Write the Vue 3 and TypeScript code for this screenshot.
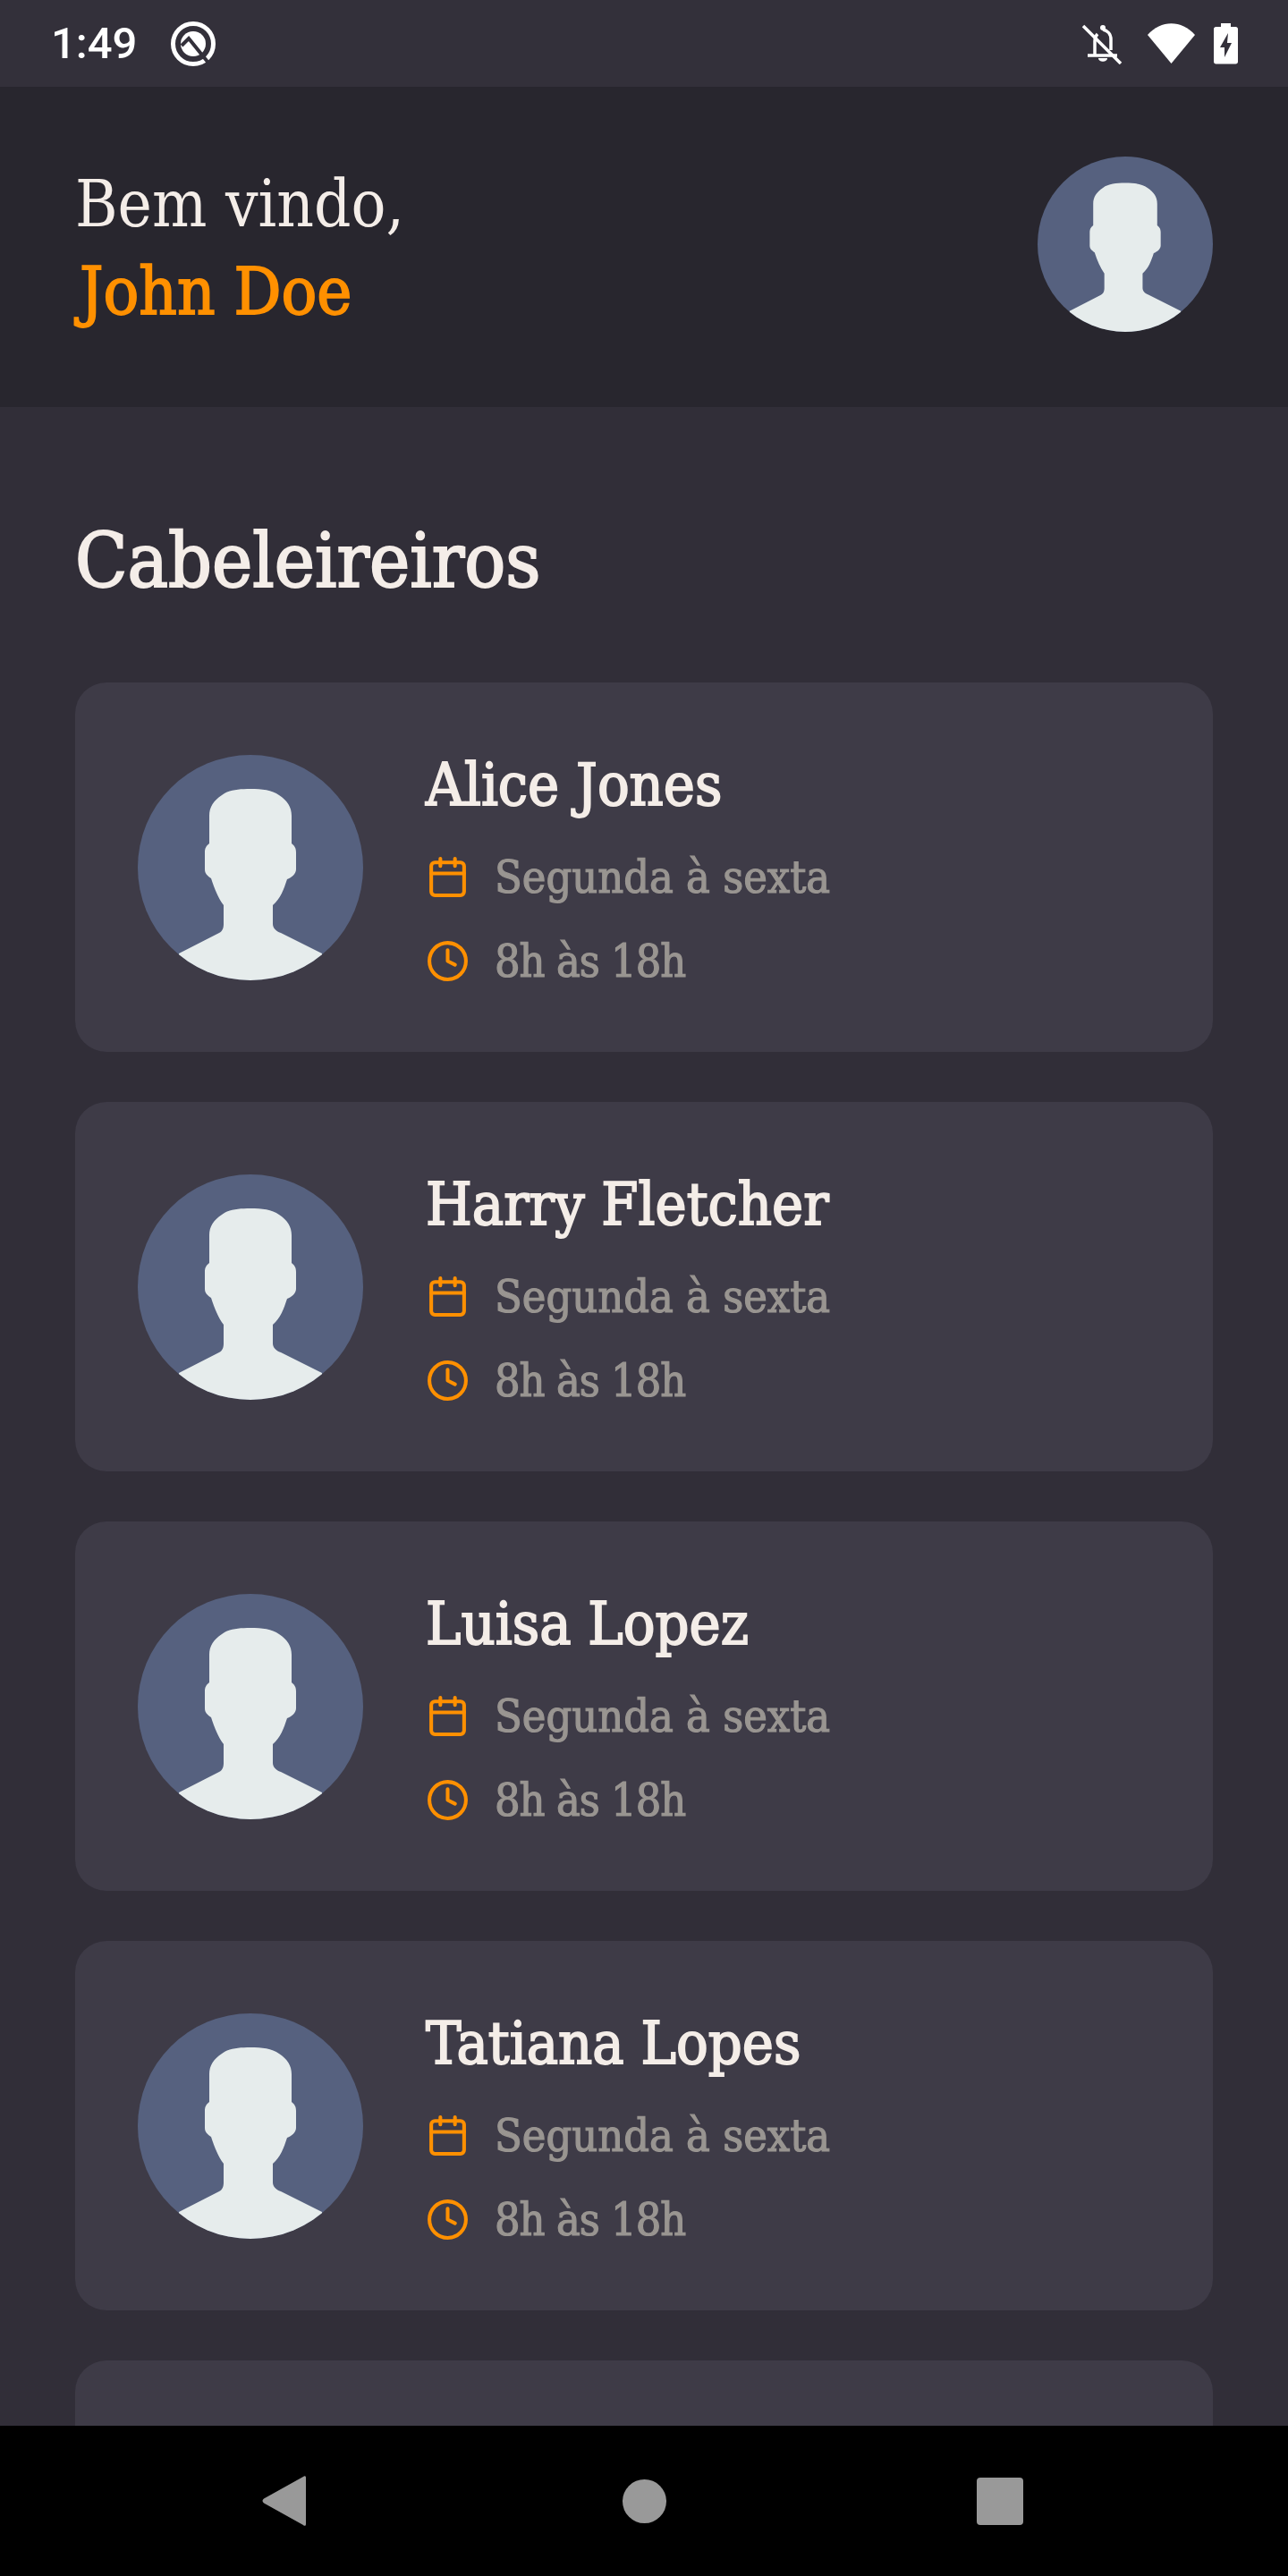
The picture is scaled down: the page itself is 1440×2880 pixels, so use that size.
<script setup lang="ts">
interface Barber {
  name: string;
}

const barbers: Barber[] = [
  { name: 'Alice Jones' },
  { name: 'Harry Fletcher' },
  { name: 'Luisa Lopez' },
  { name: 'Tatiana Lopes' },
  { name: '' },
];

const silhouette =
  'M126 38C139 38 150 39 158 45C167 51 172 58 172 68L172 99C176 102 177 105 177 109L177 128C177 133 172 137 167 139C163 151 160 160 151 168L151 189C151 193 154 197 160 199L206 222L206 252L46 252L46 222L91 199C95 197 96 193 96 189L96 168C90 160 86 150 82 138C78 135 75 133 75 128L75 109C75 105 76 102 80 99L80 68C80 58 85 51 94 45C102 39 113 38 126 38Z';
</script>

<template>
  <div class="screen">
    <div class="status-bar">
      <div class="status-left">
        <span class="clock">1:49</span>
        <svg viewBox="0 0 50 50" width="50" height="50">
          <circle cx="25" cy="25" r="22.500" fill="none" stroke="#fff" stroke-width="5" />
          <circle cx="25" cy="25" r="14" fill="#fff" />
          <path d="M12 27L20 19L41 45" fill="none" stroke="#33303a" stroke-width="4" />
        </svg>
      </div>
      <div class="status-right">
        <svg class="bell" viewBox="0 0 46 46" width="46" height="46">
          <path d="M7 36H40M15 36V20C15 17 16 14 18 12M33 30V18C33 12 29 8 24 7" fill="none" stroke="#fff" stroke-width="3.500" />
          <circle cx="24" cy="5" r="3" fill="#fff" />
          <path d="M19 39C19 44 29 44 29 39Z" fill="#fff" />
          <path d="M2 3L44 45" stroke="#fff" stroke-width="3.500" />
        </svg>
        <svg class="wifi" viewBox="0 0 53 45" width="53" height="45">
          <path d="M0 13C15 -4 38 -4 53 13L26.500 45Z" fill="#fff" />
        </svg>
        <svg viewBox="0 0 27 46" width="27" height="46">
          <path d="M8 0H19V4H24.500C26 4 27 5 27 6.500V43C27 44.500 26 45.500 24.500 45.500H2.500C1 45.500 0 44.500 0 43V6.500C0 5 1 4 2.500 4H8Z" fill="#fff" />
          <path d="M16 11L7 27H12V38L20 22H15Z" fill="#33303a" />
        </svg>
      </div>
    </div>

    <header class="header">
      <div class="greeting">
        <span>Bem vindo,</span>
        <strong>John Doe</strong>
      </div>
      <svg class="avatar avatar-small" viewBox="0 0 252 252">
        <rect width="252" height="252" fill="#56617f" />
        <path :d="silhouette" fill="#e6ecec" />
      </svg>
    </header>

    <main class="content">
      <h1 class="title">Cabeleireiros</h1>
      <div class="list">
        <div v-for="barber in barbers" :key="barber.name" class="card">
          <template v-if="barber.name">
            <svg class="avatar" viewBox="0 0 252 252">
              <rect width="252" height="252" fill="#56617f" />
              <path :d="silhouette" fill="#e6ecec" />
            </svg>
            <div class="info">
              <h2 class="name">{{ barber.name }}</h2>
              <div class="row">
                <svg class="icon" viewBox="0 0 24 24">
                  <rect x="3" y="4" width="18" height="18" rx="2" />
                  <path d="M16 2v4M8 2v4M3 10h18" />
                </svg>
                <span>Segunda à sexta</span>
              </div>
              <div class="row row-time">
                <svg class="icon" viewBox="0 0 24 24">
                  <circle cx="12" cy="12" r="10" />
                  <path d="M12 6v6l4 2" />
                </svg>
                <span>8h às 18h</span>
              </div>
            </div>
          </template>
        </div>
      </div>
    </main>

    <nav class="nav-bar">
      <svg viewBox="0 0 49 56" width="49" height="56">
        <path d="M49 2V54C49 56 47.500 56.500 46 55L2 30.500C0 29 0 27 2 25.500L46 1C47.500 -.5 49 0 49 2Z" fill="#999" />
      </svg>
      <span class="home"></span>
      <span class="recent"></span>
    </nav>
  </div>
</template>

<style scoped>
.screen {
  width: 1440px;
  height: 2880px;
  display: flex;
  flex-direction: column;
  overflow: hidden;
  background: #312e38;
  font-family: "DejaVu Serif", "Liberation Serif", serif;
  font-stretch: condensed;
  color: #f4ede8;
}

.status-bar {
  height: 97px;
  box-sizing: border-box;
  flex-shrink: 0;
  display: flex;
  align-items: center;
  justify-content: space-between;
  padding: 0 56px 0 57px;
  background: #33303a;
  font-family: Roboto, "Noto Sans", sans-serif;
  font-stretch: normal;
  color: #fff;
}

.status-left,
.status-right {
  display: flex;
  align-items: center;
}

.status-left {
  gap: 38px;
}

.bell {
  margin-right: 28px;
}

.wifi {
  margin-right: 21px;
}

.clock {
  font-size: 49px;
  font-weight: 500;
}

.header {
  height: 358px;
  box-sizing: border-box;
  flex-shrink: 0;
  display: flex;
  align-items: flex-start;
  justify-content: space-between;
  padding: 78px 84px 0;
  background: #28262e;
}

.greeting {
  display: flex;
  flex-direction: column;
  margin-top: 4px;
  font-size: 72px;
  line-height: 98px;
}

.greeting strong {
  padding-left: 5px;
  color: #ff9000;
  font-size: 73.500px;
  font-weight: 400;
  -webkit-text-stroke: 1.8px #ff9000;
}

.avatar {
  width: 252px;
  height: 252px;
  flex-shrink: 0;
  border-radius: 50%;
}

.avatar-small {
  width: 196px;
  height: 196px;
}

.content {
  flex: 1;
  min-height: 0;
  overflow: hidden;
  padding: 0 84px;
}

.title {
  margin: 116px 0 80px;
  font-size: 85px;
  line-height: 112px;
  font-weight: 400;
  -webkit-text-stroke: 2px #f4ede8;
}

.list {
  display: flex;
  flex-direction: column;
  gap: 56px;
}

.card {
  height: 413px;
  box-sizing: border-box;
  flex-shrink: 0;
  display: flex;
  align-items: center;
  gap: 70px;
  padding: 0 70px;
  border-radius: 35px;
  background: #3e3b47;
}

.info {
  padding-top: 18px;
}

.name {
  margin: 0 0 14px;
  font-size: 66px;
  line-height: 84px;
  font-weight: 400;
  -webkit-text-stroke: 1.8px #f4ede8;
}

.row {
  display: flex;
  align-items: center;
  gap: 28px;
  height: 94px;
  color: #999591;
  font-size: 50px;
  -webkit-text-stroke: 1.2px #999591;
}

.row-time {
  letter-spacing: -1px;
}

.icon {
  width: 49px;
  height: 49px;
  fill: none;
  stroke: #ff9000;
  stroke-width: 2;
  stroke-linecap: round;
  stroke-linejoin: round;
}

.nav-bar {
  height: 168px;
  box-sizing: border-box;
  flex-shrink: 0;
  display: flex;
  align-items: center;
  padding-left: 293px;
  background: #000;
}

.home {
  width: 49px;
  height: 49px;
  margin: 0 347px 0 354px;
  border-radius: 50%;
  background: #999;
}

.recent {
  width: 52px;
  height: 53px;
  border-radius: 4px;
  background: #999;
}
</style>
